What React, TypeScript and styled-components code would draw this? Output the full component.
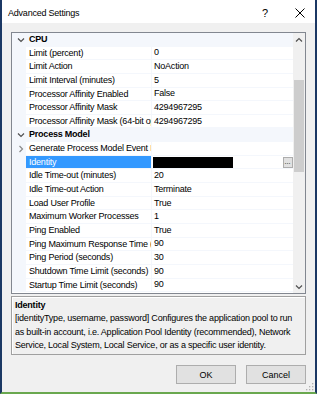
import React from "react";
import styled, { createGlobalStyle } from "styled-components";

const GlobalStyle = createGlobalStyle`
  html, body {
    margin: 0;
    padding: 0;
    background: #f0f0f0;
  }
  * {
    box-sizing: border-box;
  }
`;

const Window = styled.div`
  width: 317px;
  height: 394px;
  display: flex;
  flex-direction: column;
  background: #f0f0f0;
  border-left: 2px solid #1b3864;
  border-right: 2px solid #1b3864;
  border-bottom: 2px solid #6aa84f;
  font-family: "Liberation Sans", Arial, sans-serif;
  font-size: 9px;
  letter-spacing: -0.22px;
  color: #000;
  overflow: hidden;
`;

const TitleBar = styled.div`
  height: 23px;
  flex: none;
  display: flex;
  align-items: center;
  background: #fff;
  padding-left: 6px;
  padding-top: 2px;
`;

const Title = styled.div`
  flex: 1;
`;

const TitleButton = styled.div<{ $w: number }>`
  width: ${(p) => p.$w}px;
  height: 100%;
  display: flex;
  align-items: center;
  justify-content: center;
  font-size: 11px;
`;

const Body = styled.div`
  flex: 1;
  display: flex;
  flex-direction: column;
  padding: 9px 9px 0 9px;
`;

const Grid = styled.div`
  height: 262px;
  flex: none;
  display: flex;
  border: 1px solid #828790;
  background: #fff;
`;

const Rows = styled.div`
  flex: 1;
  display: flex;
  flex-direction: column;
  overflow: hidden;
`;

const Row = styled.div`
  height: 13.65px;
  flex: none;
  display: grid;
  grid-template-columns: 14px 126px 1fr;
  align-items: stretch;
  line-height: 13px;
`;

const CategoryRow = styled(Row)`
  background: #f4f7fc;
  font-weight: bold;
`;

const Margin = styled.div`
  background: #f4f7fc;
  display: flex;
  align-items: center;
  justify-content: center;
  padding-left: 3px;
`;

const NameCell = styled.div<{ $selected?: boolean }>`
  padding-left: 3px;
  white-space: nowrap;
  overflow: hidden;
  text-overflow: clip;
  border-bottom: 1px solid #f4f7fc;
  border-right: 1px solid #f4f7fc;
  background: ${(p) => (p.$selected ? "#3399ff" : "#fff")};
  color: ${(p) => (p.$selected ? "#fff" : "#000")};
`;

const CategoryName = styled.div`
  grid-column: 2 / 4;
  padding-left: 3px;
  white-space: nowrap;
`;

const ValueCell = styled.div`
  position: relative;
  padding-left: 2px;
  white-space: nowrap;
  overflow: hidden;
  border-bottom: 1px solid #f4f7fc;
  display: flex;
  align-items: center;
`;

const Redacted = styled.div`
  width: 80px;
  height: 11px;
  background: #000;
  margin-left: -1px;
`;

const EllipsisButton = styled.div`
  position: absolute;
  right: 0;
  top: 1px;
  width: 10px;
  height: 11px;
  border: 1px solid #adadad;
  background: #e1e1e1;
  font-size: 7px;
  line-height: 7px;
  text-align: center;
  letter-spacing: 0;
`;

const Scrollbar = styled.div`
  width: 12.5px;
  flex: none;
  background: #f0f0f0;
  display: flex;
  flex-direction: column;
`;

const ScrollArrow = styled.div`
  height: 13px;
  flex: none;
  display: flex;
  align-items: center;
  justify-content: center;
`;

const ScrollTrack = styled.div`
  flex: 1;
  padding-top: 34px;
`;

const Thumb = styled.div`
  margin: 0 1px;
  height: 92px;
  background: #cdcdcd;
`;

const Description = styled.div`
  margin-top: 2px;
  height: 59px;
  flex: none;
  border: 1px solid #a0a0a0;
  box-shadow: inset 1px 1px 0 #fff;
  padding: 2px 3px 0 3px;
  line-height: 13.3px;
`;

const DescTitle = styled.div`
  font-weight: bold;
`;

const Footer = styled.div`
  display: flex;
  justify-content: flex-end;
  gap: 10px;
  margin-top: 10px;
  position: relative;
  flex: 1;
`;

const Button = styled.div`
  width: 60px;
  height: 19px;
  border: 1px solid #adadad;
  background: #e1e1e1;
  display: flex;
  align-items: center;
  justify-content: center;
  letter-spacing: 0;
`;

const Grip = styled.svg`
  position: absolute;
  right: -8px;
  bottom: 1px;
`;

const Chevron = ({ dir }: { dir: "down" | "right" | "up" }) => {
  const d =
    dir === "down"
      ? "M1 2.5 L4 5.5 L7 2.5"
      : dir === "up"
      ? "M1 5.5 L4 2.5 L7 5.5"
      : "M2.5 1 L5.5 4 L2.5 7";
  return (
    <svg width="8" height="8" viewBox="0 0 8 8">
      <path d={d} fill="none" stroke={dir === "right" ? "#8a8a8a" : "#505050"} strokeWidth="1.2" />
    </svg>
  );
};

type Item = { name: string; value?: string; selected?: boolean; expandable?: boolean; redacted?: boolean };
type Category = { title: string; items: Item[] };

const data: Category[] = [
  {
    title: "CPU",
    items: [
      { name: "Limit (percent)", value: "0" },
      { name: "Limit Action", value: "NoAction" },
      { name: "Limit Interval (minutes)", value: "5" },
      { name: "Processor Affinity Enabled", value: "False" },
      { name: "Processor Affinity Mask", value: "4294967295" },
      { name: "Processor Affinity Mask (64-bit option)", value: "4294967295" },
    ],
  },
  {
    title: "Process Model",
    items: [
      { name: "Generate Process Model Event Log Entry", expandable: true },
      { name: "Identity", selected: true, redacted: true },
      { name: "Idle Time-out (minutes)", value: "20" },
      { name: "Idle Time-out Action", value: "Terminate" },
      { name: "Load User Profile", value: "True" },
      { name: "Maximum Worker Processes", value: "1" },
      { name: "Ping Enabled", value: "True" },
      { name: "Ping Maximum Response Time (seconds)", value: "90" },
      { name: "Ping Period (seconds)", value: "30" },
      { name: "Shutdown Time Limit (seconds)", value: "90" },
      { name: "Startup Time Limit (seconds)", value: "90" },
    ],
  },
];

export default function App() {
  return (
    <>
      <GlobalStyle />
      <Window>
        <TitleBar>
          <Title>Advanced Settings</Title>
          <TitleButton $w={40}>?</TitleButton>
          <TitleButton $w={30}>
            <svg width="10" height="10" viewBox="0 0 10 10">
              <path d="M0.5 0.5 L9.5 9.5 M9.5 0.5 L0.5 9.5" stroke="#000" strokeWidth="1" />
            </svg>
          </TitleButton>
        </TitleBar>
        <Body>
          <Grid>
            <Rows>
              {data.map((cat) => (
                <React.Fragment key={cat.title}>
                  <CategoryRow>
                    <Margin>
                      <Chevron dir="down" />
                    </Margin>
                    <CategoryName>{cat.title}</CategoryName>
                  </CategoryRow>
                  {cat.items.map((item) => (
                    <Row key={item.name}>
                      <Margin>{item.expandable && <Chevron dir="right" />}</Margin>
                      <NameCell $selected={item.selected}>{item.name}</NameCell>
                      <ValueCell>
                        {item.redacted ? (
                          <>
                            <Redacted />
                            <EllipsisButton>...</EllipsisButton>
                          </>
                        ) : (
                          item.value
                        )}
                      </ValueCell>
                    </Row>
                  ))}
                </React.Fragment>
              ))}
            </Rows>
            <Scrollbar>
              <ScrollArrow>
                <Chevron dir="up" />
              </ScrollArrow>
              <ScrollTrack>
                <Thumb />
              </ScrollTrack>
              <ScrollArrow>
                <Chevron dir="down" />
              </ScrollArrow>
            </Scrollbar>
          </Grid>
          <Description>
            <DescTitle>Identity</DescTitle>
            [identityType, username, password] Configures the application pool to run as built-in account, i.e.
            Application Pool Identity (recommended), Network Service, Local System, Local Service, or as a specific
            user identity.
          </Description>
          <Footer>
            <Button>OK</Button>
            <Button>Cancel</Button>
            <Grip width="8" height="8" viewBox="0 0 8 8">
              <g fill="#b0b0b0">
                <rect x="6" y="0" width="1.3" height="1.3" />
                <rect x="3" y="3" width="1.3" height="1.3" />
                <rect x="6" y="3" width="1.3" height="1.3" />
                <rect x="0" y="6" width="1.3" height="1.3" />
                <rect x="3" y="6" width="1.3" height="1.3" />
                <rect x="6" y="6" width="1.3" height="1.3" />
              </g>
            </Grip>
          </Footer>
        </Body>
      </Window>
    </>
  );
}
